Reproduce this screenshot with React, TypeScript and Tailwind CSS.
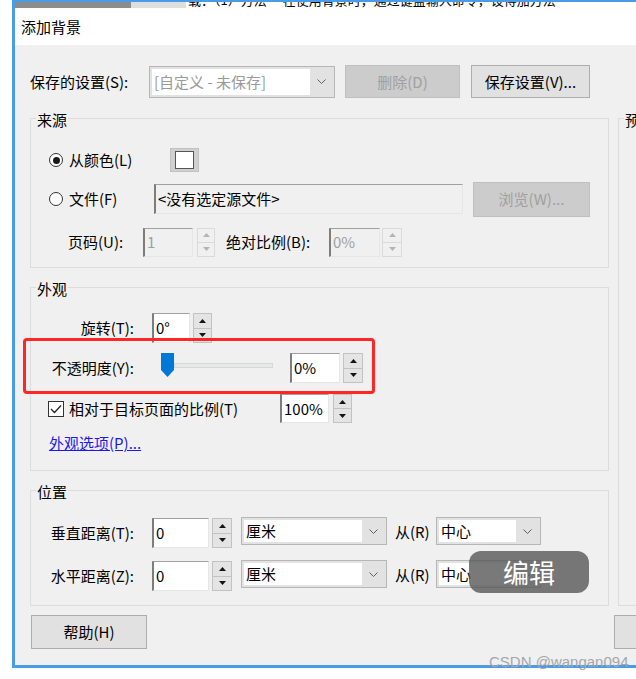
import React from 'react';

const Up = ({ c }: { c: string }) => (
  <svg width="7" height="4" viewBox="0 0 7 4"><path d="M3.5 0L7 4H0z" fill={c} /></svg>
);
const Down = ({ c }: { c: string }) => (
  <svg width="7" height="4" viewBox="0 0 7 4"><path d="M0 0h7L3.5 4z" fill={c} /></svg>
);

const Spin = ({ className = '', disabled = false }: { className?: string; disabled?: boolean }) => {
  const c = disabled ? '#b4b4b4' : '#141414';
  const box = disabled ? 'border-[#dadada] bg-[#f0f0f0]' : 'border-[#c2c2c2] bg-[#e4e4e4]';
  return (
    <div className={`flex shrink-0 flex-col ${className}`}>
      <div className={`flex flex-1 items-center justify-center border ${box}`}><Up c={c} /></div>
      <div className={`-mt-px flex flex-1 items-center justify-center border ${box}`}><Down c={c} /></div>
    </div>
  );
};

// sunken text box, tone picks the fill
const Field = ({ className = '', tone = 'white', children }: { className?: string; tone?: 'white' | 'off' | 'file'; children?: React.ReactNode }) => {
  const t = tone === 'white' ? 'bg-white text-black' : tone === 'off' ? 'bg-[#f0f0f0] text-[#a0a0a0]' : 'bg-[#f0f0f0] text-black';
  return (
    <div className={`flex shrink-0 items-center border-t border-l-2 border-r border-b border-t-[#a0a0a0] border-l-[#7d7d7d] border-r-[#e6e6e6] border-b-[#e6e6e6] pl-[2px] ${t} ${className}`}>
      {children}
    </div>
  );
};

const Chevron = () => (
  <svg width="9" height="5" viewBox="0 0 9 5"><path d="M0.5 0.5L4.5 4.5L8.5 0.5" fill="none" stroke="#606060" strokeWidth="1" /></svg>
);

const Select = ({ className = '', muted = false, children }: { className?: string; muted?: boolean; children?: React.ReactNode }) => (
  <div className={`flex shrink-0 border border-[#b6b6b6] bg-[#e2e2e2] p-[2px] ${className}`}>
    <div className={`flex flex-1 items-center bg-white pl-[2px] ${muted ? 'text-[#9a9a9a]' : 'text-black'}`}>{children}</div>
    <div className="flex w-[22px] items-center justify-center"><Chevron /></div>
  </div>
);

const Btn = ({ className = '', disabled = false, children }: { className?: string; disabled?: boolean; children?: React.ReactNode }) => (
  <div className={`flex shrink-0 items-center justify-center border ${disabled ? 'border-[#bfbfbf] bg-[#cccccc] text-[#a0a0a0]' : 'border-[#adadad] bg-[#e1e1e1] text-black'} ${className}`}>
    {children}
  </div>
);

const Radio = ({ checked = false }: { checked?: boolean }) => (
  <div className="flex h-[14px] w-[14px] shrink-0 items-center justify-center rounded-full border border-[#333] bg-white">
    {checked && <div className="h-[7px] w-[7px] rounded-full bg-[#1a1a1a]" />}
  </div>
);

const Check = () => (
  <div className="flex h-[16px] w-[16px] shrink-0 items-center justify-center border border-[#333] bg-white">
    <svg width="12" height="10" viewBox="0 0 12 10"><path d="M1 5L4.5 8.5L11 1.5" fill="none" stroke="#222" strokeWidth="1.3" /></svg>
  </div>
);

const Group = ({ title, className = '', children }: { title: string; className?: string; children?: React.ReactNode }) => (
  <fieldset className={`border border-[#dcdcdc] ${className}`}>
    <legend className="ml-[5px] px-[1px] pt-[4px] leading-[20px]">{title}</legend>
    {children}
  </fieldset>
);

export default function App() {
  return (
    <div className="relative h-[679px] w-[636px] overflow-hidden bg-white font-['Noto_Sans_CJK_SC','Noto_Sans',sans-serif] text-[15px] leading-[20px] text-black">
      {/* dialog window, right side runs off screen */}
      <div className="ml-[12px] flex h-[668px] flex-col overflow-hidden border-b-[3px] border-l-[3px] border-[#4a9be8]">
        <div className="h-[2px] shrink-0 bg-[#4a9be8]" />
        <div className="flex h-[6px] shrink-0 overflow-hidden">
          <div className="w-[116px] bg-[#8c8c8c]" />
          <div className="w-[55px] bg-[#dedede]" />
          <div className="flex-1 overflow-hidden bg-white">
            <div className="-mt-[10px] whitespace-nowrap pl-[2px] text-[13px] leading-[16px]">载：（1）方法一 在使用背景时，通过键盘输入命令，设得加方法一</div>
          </div>
        </div>

        <div className="flex h-[37px] shrink-0 items-center bg-white pl-[6px]">添加背景</div>

        <div className="flex-1 bg-[#f0f0f0] pl-[15px] pt-[20px]">
          {/* saved settings */}
          <div className="flex h-[33px] items-center">
            <div className="w-[119px] shrink-0">保存的设置(S):</div>
            <Select muted className="h-[32px] w-[186px]">[自定义 - 未保存]</Select>
            <Btn disabled className="ml-[10px] h-[33px] w-[115px]">删除(D)</Btn>
            <Btn className="ml-[11px] h-[33px] w-[119px]">保存设置(V)...</Btn>
          </div>

          <div className="mt-[8px] flex items-start gap-[9px]">
            <div className="flex w-[579px] shrink-0 flex-col gap-[7px]">
              <Group title="来源" className="pb-[10px]">
                <div className="mt-[18px] flex h-[24px] items-center pl-[18px]">
                  <div className="flex w-[121px] shrink-0 items-center gap-[6px]"><Radio checked />从颜色(L)</div>
                  <div className="flex h-[24px] w-[29px] items-center justify-center border border-[#c2c2c2] bg-[#d0d0d0]">
                    <div className="h-[18px] w-[19px] border border-[#555] bg-white" />
                  </div>
                </div>
                <div className="mt-[9px] flex h-[36px] items-center pl-[18px]">
                  <div className="flex w-[105px] shrink-0 items-center gap-[6px]"><Radio />文件(F)</div>
                  <Field tone="file" className="h-[30px] w-[309px]">&lt;没有选定源文件&gt;</Field>
                  <Btn disabled className="ml-[10px] h-[35px] w-[117px]">浏览(W)...</Btn>
                </div>
                <div className="mt-[10px] flex h-[30px] items-center pl-[37px]">
                  <div className="w-[75px] shrink-0">页码(U):</div>
                  <Field tone="off" className="h-[29px] w-[50px]">1</Field>
                  <Spin disabled className="ml-[4px] h-[29px] w-[18px]" />
                  <div className="ml-[11px] w-[103px] shrink-0">绝对比例(B):</div>
                  <Field tone="off" className="h-[29px] w-[51px]">0%</Field>
                  <Spin disabled className="ml-[2px] h-[29px] w-[20px]" />
                </div>
              </Group>

              <Group title="外观" className="pb-[17px]">
                <div className="mt-[14px] flex h-[30px] items-center">
                  <div className="w-[121px] shrink-0 pr-[18px] text-right">旋转(T):</div>
                  <Field className="h-[30px] w-[38px]">0°</Field>
                  <Spin className="ml-[3px] h-[30px] w-[19px]" />
                </div>
                <div className="mt-[10px] flex h-[30px] items-center">
                  <div className="w-[121px] shrink-0 pr-[18px] text-right">不透明度(Y):</div>
                  <div className="mb-[6px] ml-[9px] flex w-[112px] shrink-0 items-center">
                    <svg width="13" height="24" viewBox="0 0 13 24"><path d="M0 0h13v17l-6.5 7L0 17z" fill="#0078d7" /></svg>
                    <div className="h-[5px] flex-1 border border-[#d8d8d8] bg-[#e7e9e9]" />
                  </div>
                  <Field className="ml-[17px] h-[30px] w-[50px]">0%</Field>
                  <Spin className="ml-[3px] h-[30px] w-[20px]" />
                </div>
                <div className="mt-[11px] flex h-[29px] items-center pl-[17px]">
                  <div className="flex w-[232px] shrink-0 items-center gap-[5px]"><Check />相对于目标页面的比例(T)</div>
                  <Field className="h-[29px] w-[49px]">100%</Field>
                  <Spin className="ml-[4px] h-[29px] w-[19px]" />
                </div>
                <div className="mt-[10px] h-[20px] pl-[18px]">
                  <span className="text-[#1a1aee] underline">外观选项(P)...</span>
                </div>
              </Group>

              <Group title="位置" className="pb-[14px]">
                <div className="mt-[16px] flex h-[30px] items-center">
                  <div className="w-[121px] shrink-0 pr-[18px] text-right">垂直距离(T):</div>
                  <Field className="h-[30px] w-[57px]">0</Field>
                  <Spin className="ml-[3px] h-[30px] w-[20px]" />
                  <Select className="-mt-[4px] ml-[9px] h-[28px] w-[146px]">厘米</Select>
                  <div className="-mt-[2px] ml-[8px] w-[41px] shrink-0">从(R)</div>
                  <Select className="-mt-[4px] h-[28px] w-[105px]">中心</Select>
                </div>
                <div className="mt-[13px] flex h-[30px] items-center">
                  <div className="w-[121px] shrink-0 pr-[18px] text-right">水平距离(Z):</div>
                  <Field className="h-[30px] w-[57px]">0</Field>
                  <Spin className="ml-[3px] h-[30px] w-[20px]" />
                  <Select className="-mt-[4px] ml-[9px] h-[28px] w-[146px]">厘米</Select>
                  <div className="-mt-[2px] ml-[8px] w-[41px] shrink-0">从(R)</div>
                  <Select className="-mt-[4px] h-[28px] w-[105px]">中心</Select>
                </div>
              </Group>
            </div>

            <Group title="预" className="h-[500px] w-[200px] shrink-0" />
          </div>

          <div className="mt-[9px] flex">
            <Btn className="ml-[1px] h-[34px] w-[116px]">帮助(H)</Btn>
            <Btn className="ml-[467px] h-[34px] w-[100px]" />
          </div>
        </div>
      </div>

      {/* annotation + screenshot overlays */}
      <div className="absolute left-[23px] top-[338px] h-[56px] w-[352px] rounded-[4px] border-[3px] border-[#ff2626]" />
      <div className="absolute left-[469px] top-[551px] flex h-[42px] w-[120px] items-center justify-center rounded-[12px] bg-[rgba(88,88,88,0.8)] text-[26px] leading-[30px] text-white">
        编辑
      </div>
      <div className="absolute left-[489px] top-[653px] font-['Liberation_Sans',sans-serif] text-[15px] leading-[18px] text-[#a6a6a6]">
        CSDN @wangan094
      </div>
    </div>
  );
}
